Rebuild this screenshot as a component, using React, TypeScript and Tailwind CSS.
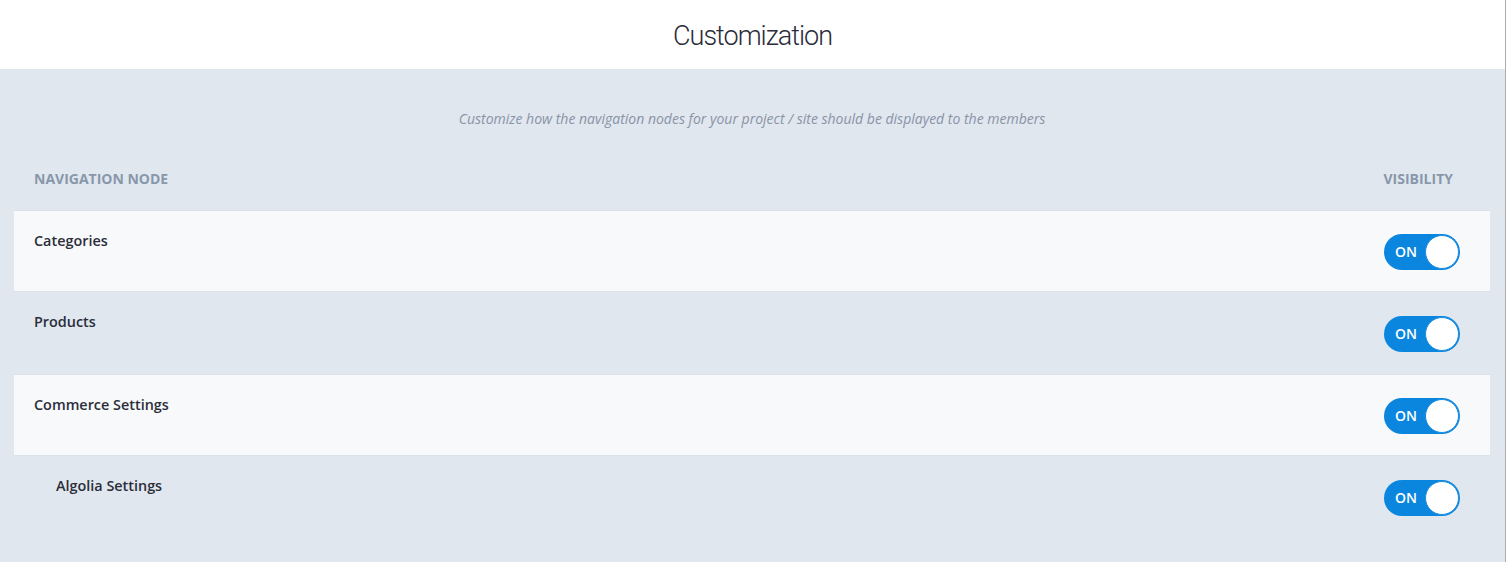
const nodes = [
  { label: 'Categories', depth: 0 },
  { label: 'Products', depth: 0 },
  { label: 'Commerce Settings', depth: 0 },
  { label: 'Algolia Settings', depth: 1 },
];

function Toggle() {
  return (
    <div className="flex items-center h-9 w-[76px] rounded-full bg-[#0a86df] pl-[11px] pr-px">
      <span className="flex-1 text-[14px] font-semibold text-white leading-none">ON</span>
      <span className="h-[34px] w-[34px] rounded-full bg-white border border-[#1c8de0]" />
    </div>
  );
}

export default function App() {
  return (
    <div className="w-[1506px] h-[562px] flex font-['Open_Sans',sans-serif]">
      <div className="flex-1 flex flex-col border-r border-[#a9abae] bg-[#e0e7ef]">
        <header className="h-[69px] bg-white flex items-center justify-center pt-1">
          <h1 className="font-['Roboto',sans-serif] font-light text-[27px] text-[#2a2c3a] tracking-[-1px]">
            Customization
          </h1>
        </header>

        <main className="pl-[14px] pr-[15px] pt-10">
          <p className="text-center italic text-[14px] leading-5 text-[#8a93a6]">
            Customize how the navigation nodes for your project / site should be displayed to the members
          </p>

          <div className="flex justify-between pl-5 pr-[37px] pt-10 pb-[21px] text-[14px] leading-5 font-bold uppercase text-[#8897aa]">
            <span>Navigation Node</span>
            <span>Visibility</span>
          </div>

          <div>
            {nodes.map((node, i) => (
              <div
                key={node.label}
                className={
                  i % 2 === 0
                    ? 'h-[82px] flex justify-between pl-5 pr-[30px] bg-[#f8f9fb] border-y border-[#dbe2ea]'
                    : 'h-[82px] flex justify-between pl-5 pr-[30px]'
                }
              >
                <div className={node.depth ? 'pt-[17px] pl-[22px]' : 'pt-[17px]'}>
                  <span className="text-[14.4px] leading-5 font-semibold text-[#2b2e3a]">{node.label}</span>
                </div>
                <div className="self-center pt-[2px]">
                  <Toggle />
                </div>
              </div>
            ))}
          </div>
        </main>
      </div>
    </div>
  );
}
